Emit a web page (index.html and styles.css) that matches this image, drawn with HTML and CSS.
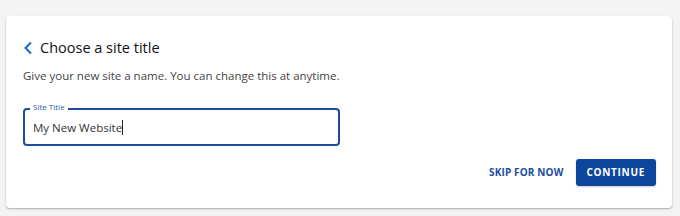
FILE: index.html
```html
<!DOCTYPE html>
<html lang="en">
<head>
    <meta charset="UTF-8">
    <title>Choose a site title</title>
    <link rel="stylesheet" href="styles.css">
</head>
<body>
    <div class="card">
        <!-- Heading with back link -->
        <div class="card-header">
            <a class="back" href="#">
                <svg width="10" height="14" viewBox="0 0 10 14">
                    <path d="M8 1.5 L2.5 7 L8 12.5" fill="none" stroke="#1a66d2" stroke-width="2"/>
                </svg>
            </a>
            <h2>Choose a site title</h2>
        </div>
        <p class="intro">Give your new site a name. You can change this at anytime.</p>

        <!-- Site title field -->
        <div class="field">
            <label for="site-title">Site Title</label>
            <input type="text" id="site-title" value="My New Website">
            <span class="caret"></span>
        </div>

        <div class="actions">
            <button class="skip">SKIP FOR NOW</button>
            <button class="continue">CONTINUE</button>
        </div>
    </div>
</body>
</html>
```
FILE: styles.css
```css
body {
    font-family: 'Open Sans', sans-serif;
    background-color: #f3f3f3;
    color: #333;
    margin: 0;
    padding: 16px 8px 8px 6px;
}

.card {
    background: #fff;
    border-radius: 4px;
    box-shadow: 0 1px 2px rgba(0,0,0,0.3);
    padding: 22px 16px 22px 17px;
    height: 148px;
}

.card-header {
    display: flex;
    align-items: center;
}

.back {
    display: flex;
    width: 17px;
}

.card-header h2 {
    margin: 0;
    font-size: 14.5px;
    font-weight: 500;
    color: #111;
}

.intro {
    margin: 11px 0 0;
    font-size: 11.5px;
    color: #444;
}

.field {
    position: relative;
    width: 317px;
    margin-top: 25px;
}

.field label {
    position: absolute;
    left: 7px;
    top: -6px;
    background: #fff;
    padding: 0 3px;
    font-size: 8px;
    line-height: 10px;
    color: #1f5aa6;
}

.field input {
    box-sizing: border-box;
    width: 100%;
    height: 38px;
    border: 2px solid #1c4c9c;
    border-radius: 4px;
    padding: 0 8px;
    font-family: 'Open Sans', sans-serif;
    font-size: 11.5px;
    color: #333;
    outline: none;
}

/* text cursor at the end of the value */
.field .caret {
    position: absolute;
    left: 99px;
    top: 12px;
    width: 1px;
    height: 15px;
    background: #222;
}

.actions {
    display: flex;
    justify-content: flex-end;
    align-items: center;
    gap: 12px;
    margin-top: 11px;
}

.actions button {
    font-family: 'Open Sans', sans-serif;
    font-size: 10px;
    font-weight: 700;
    letter-spacing: 0.7px;
    border: none;
    border-radius: 3px;
    cursor: pointer;
}

.actions .skip {
    background: none;
    color: #1c4c9c;
    padding: 8px 0;
    letter-spacing: 0.15px;
}

.continue {
    background: #0e469e;
    color: #fff;
    height: 27px;
    padding: 0 11px;
    box-shadow: 0 1px 2px rgba(0,0,0,0.2);
}
```
